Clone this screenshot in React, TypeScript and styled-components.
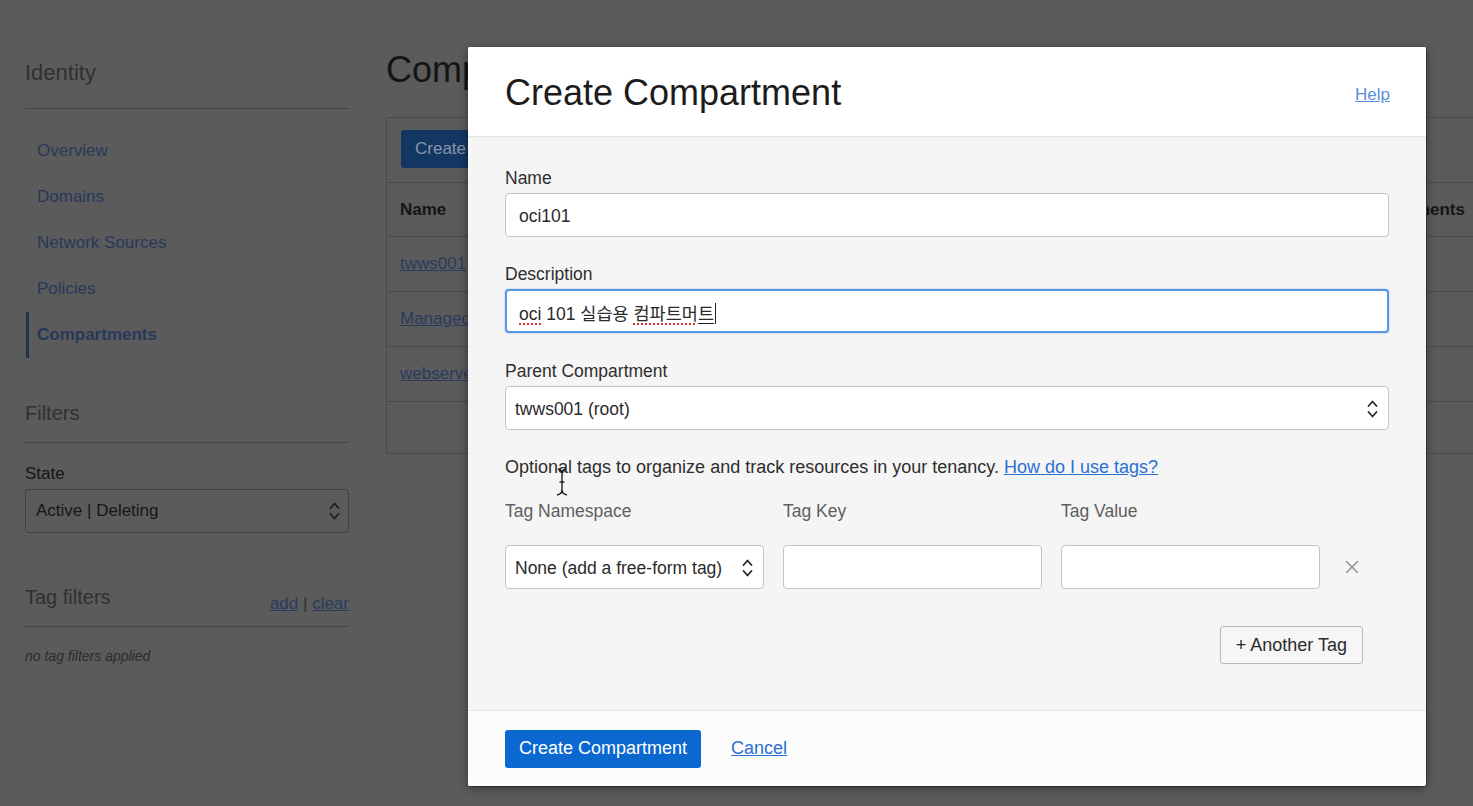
import styled, { createGlobalStyle } from 'styled-components';
import { X } from 'lucide-react';

const GlobalStyle = createGlobalStyle`
  * { box-sizing: border-box; }
  html, body { margin: 0; padding: 0; }
  body {
    font-family: 'Liberation Sans', 'Noto Sans CJK KR', Arial, sans-serif;
    background: #5c5c5c;
    overflow: hidden;
  }
`;

const navItems = ['Overview', 'Domains', 'Network Sources', 'Policies', 'Compartments'];
const rows = ['twws001', 'ManagedCompartmentForPaaS', 'webserver'];

function Chevrons({ color = '#2a2a2a' }: { color?: string }) {
  return (
    <svg width='11' height='20' viewBox='0 0 11 20' fill='none' stroke={color} strokeWidth='1.8' strokeLinecap='round' strokeLinejoin='round'>
      <path d='M1.5 7 L5.5 2.5 L9.5 7' />
      <path d='M1.5 13 L5.5 17.5 L9.5 13' />
    </svg>
  );
}

function IBeam() {
  return (
    <svg width='14' height='28' viewBox='0 0 14 28' fill='none' stroke='#111' strokeWidth='1.3'>
      <path d='M3 1 Q7 2 7 5 Q7 2 11 1' />
      <path d='M7 5 V23' />
      <path d='M4.5 14 H9.5' />
      <path d='M2 27 Q7 26 7 22 Q7 26 12 27' />
    </svg>
  );
}

export default function App() {
  return (
    <>
      <GlobalStyle />
      <Page>
        <Sidebar>
          <SideTitle>Identity</SideTitle>
          <NavList>
            {navItems.map((item) => (
              <NavItem key={item} $active={item === 'Compartments'}>
                {item}
              </NavItem>
            ))}
          </NavList>
          <FilterTitle>Filters</FilterTitle>
          <StateLabel>State</StateLabel>
          <DimSelect>
            <span>Active | Deleting</span>
            <Chevrons color='#1e1e1e' />
          </DimSelect>
          <TagFilterRow>
            <span className='title'>Tag filters</span>
            <span className='links'>
              <DimLink>add</DimLink> | <DimLink>clear</DimLink>
            </span>
          </TagFilterRow>
          <NoFilters>no tag filters applied</NoFilters>
        </Sidebar>

        <Main>
          <PageHeading>Compartments</PageHeading>
          <Panel>
            <Toolbar>
              <DimButton>Create Compartment</DimButton>
            </Toolbar>
            <TableRow $header>
              <span>Name</span>
              <span>Child Compartments</span>
            </TableRow>
            {rows.map((r) => (
              <TableRow key={r}>
                <DimLink>{r}</DimLink>
                <span />
              </TableRow>
            ))}
            <TableRow $empty />
          </Panel>
        </Main>

        <Modal>
          <ModalHeader>
            <h1>Create Compartment</h1>
            <HelpLink>Help</HelpLink>
          </ModalHeader>

          <ModalBody>
            <Field>
              <Label>Name</Label>
              <Box>oci101</Box>
            </Field>
            <Field>
              <Label>Description</Label>
              <Box $focused>
                <span>
                  <Misspelled>oci</Misspelled> 101 실습용 <Misspelled>컴파트머</Misspelled>
                  <Composing>트</Composing>
                  <Caret />
                </span>
              </Box>
            </Field>
            <Field>
              <Label>Parent Compartment</Label>
              <Box $select>
                <span>twws001 (root)</span>
                <Chevrons />
              </Box>
            </Field>

            <TagsIntro>
              Optional tags to organize and track resources in your tenancy.{' '}
              <BlueLink>How do I use tags?</BlueLink>
              <CursorMark>
                <IBeam />
              </CursorMark>
            </TagsIntro>

            <TagGrid>
              <TagLabel>Tag Namespace</TagLabel>
              <TagLabel>Tag Key</TagLabel>
              <TagLabel>Tag Value</TagLabel>
              <span />
              <Box $select>
                <span>None (add a free-form tag)</span>
                <Chevrons />
              </Box>
              <Box />
              <Box />
              <RemoveTag>
                <X size={22} strokeWidth={1.3} color='#8a8a8a' />
              </RemoveTag>
            </TagGrid>

            <AddTagRow>
              <AddTagButton>+ Another Tag</AddTagButton>
            </AddTagRow>
          </ModalBody>

          <ModalFooter>
            <PrimaryButton>Create Compartment</PrimaryButton>
            <BlueLink>Cancel</BlueLink>
          </ModalFooter>
        </Modal>
      </Page>
    </>
  );
}

const Page = styled.div`
  position: relative;
  display: flex;
  width: 1473px;
  height: 806px;
  overflow: hidden;
  background: #5b5b5b;
`;

/* ---------- dimmed background page ---------- */

const Sidebar = styled.aside`
  flex: 0 0 324px;
  margin-left: 25px;
  padding-top: 59px;
  display: flex;
  flex-direction: column;
`;

const SideTitle = styled.h2`
  margin: 0;
  font-size: 22px;
  line-height: 28px;
  font-weight: 400;
  color: #303030;
  padding-bottom: 21px;
  border-bottom: 1px solid #464646;
`;

const NavList = styled.nav`
  padding-top: 19px;
  display: flex;
  flex-direction: column;
`;

const NavItem = styled.div<{ $active?: boolean }>`
  height: 46px;
  display: flex;
  align-items: center;
  padding-left: 8px;
  font-size: 17px;
  color: #27385a;
  font-weight: ${(p) => (p.$active ? 700 : 400)};
  border-left: 3px solid ${(p) => (p.$active ? '#22314c' : 'transparent')};
  margin-left: 1px;
`;

const FilterTitle = styled.h3`
  margin: 41px 0 0;
  font-size: 20px;
  line-height: 28px;
  font-weight: 400;
  color: #303030;
  padding-bottom: 15px;
  border-bottom: 1px solid #464646;
`;

const StateLabel = styled.div`
  margin-top: 21px;
  font-size: 17px;
  line-height: 20px;
  color: #141414;
`;

const DimSelect = styled.div`
  margin-top: 5px;
  height: 44px;
  border: 1px solid #424242;
  border-radius: 3px;
  display: flex;
  align-items: center;
  justify-content: space-between;
  padding: 0 8px 0 10px;
  font-size: 17px;
  color: #161616;
`;

const TagFilterRow = styled.div`
  margin-top: 50px;
  display: flex;
  justify-content: space-between;
  align-items: flex-end;
  padding-bottom: 12px;
  border-bottom: 1px solid #464646;

  .title {
    font-size: 20px;
    line-height: 28px;
    color: #303030;
    margin-bottom: 3px;
  }
  .links {
    font-size: 17px;
    color: #303030;
  }
`;

const DimLink = styled.span`
  color: #2a3c5e;
  text-decoration: underline;
  font-size: 17px;
`;

const NoFilters = styled.div`
  margin-top: 19px;
  font-size: 14px;
  line-height: 20px;
  font-style: italic;
  color: #2c2c2c;
`;

const Main = styled.main`
  margin-left: 37px;
  padding-top: 48px;
  flex: 0 0 1200px;
`;

const PageHeading = styled.h1`
  margin: 0;
  font-size: 36px;
  line-height: 44px;
  font-weight: 400;
  color: #141414;
  white-space: nowrap;
`;

const Panel = styled.section`
  margin-top: 25px;
  border: 1px solid #4a4a4a;
  border-radius: 2px;
`;

const Toolbar = styled.div`
  padding: 12px 14px;
  height: 64px;
`;

const DimButton = styled.div`
  display: inline-flex;
  align-items: center;
  height: 38px;
  padding: 0 14px;
  background: #143663;
  border-radius: 3px;
  color: #8796ad;
  font-size: 17px;
`;

const TableRow = styled.div<{ $header?: boolean; $empty?: boolean }>`
  display: grid;
  grid-template-columns: 1fr auto;
  align-items: center;
  height: ${(p) => (p.$header ? 54 : p.$empty ? 52 : 55)}px;
  border-top: 1px solid #4a4a4a;
  padding: 0 120px 0 13px;
  font-size: 17px;
  font-weight: ${(p) => (p.$header ? 700 : 400)};
  color: #151515;
  white-space: nowrap;
`;

/* ---------- modal ---------- */

const Modal = styled.div`
  position: absolute;
  left: 468px;
  top: 47px;
  width: 958px;
  height: 739px;
  background: #f5f5f5;
  border-radius: 2px;
  box-shadow: 0 2px 10px rgba(0, 0, 0, 0.45), 1px 1px 0 #3e3e3e;
  display: flex;
  flex-direction: column;
  overflow: hidden;
`;

const ModalHeader = styled.header`
  height: 90px;
  flex: 0 0 90px;
  background: #fff;
  border-bottom: 1px solid #e3e3e3;
  display: flex;
  align-items: center;
  justify-content: space-between;
  padding: 0 36px 0 37px;

  h1 {
    margin: 0;
    font-size: 36px;
    font-weight: 400;
    color: #1c1c1c;
    padding-top: 3px;
  }
`;

const HelpLink = styled.span`
  font-size: 17px;
  color: #5b8ed8;
  text-decoration: underline;
  padding-top: 6px;
`;

const ModalBody = styled.div`
  flex: 1;
  padding: 31px 37px 0;
  display: flex;
  flex-direction: column;
`;

const Field = styled.div`
  display: flex;
  flex-direction: column;
  gap: 5px;
  margin-bottom: 28px;
  &:first-child {
    margin-bottom: 27px;
  }
`;

const Label = styled.label`
  font-size: 17.5px;
  line-height: 20px;
  color: #2e2e2e;
`;

const Box = styled.div<{ $focused?: boolean; $select?: boolean }>`
  height: 44px;
  background: #fff;
  border: ${(p) => (p.$focused ? '2px solid #5897e6' : '1px solid #c4c4c4')};
  box-shadow: ${(p) => (p.$focused ? '0 0 2px rgba(70, 140, 230, 0.6)' : 'none')};
  border-radius: 4px;
  display: flex;
  align-items: center;
  justify-content: ${(p) => (p.$select ? 'space-between' : 'flex-start')};
  padding: ${(p) => (p.$select ? '2px 10px 0 9px' : p.$focused ? '2px 12px 0' : '2px 13px 0')};
  font-size: 17.5px;
  color: #2b2b2b;
  white-space: nowrap;
`;

const Misspelled = styled.span`
  text-decoration: underline dotted #e03030;
  text-decoration-thickness: 2px;
  text-underline-offset: 4px;
`;

const Composing = styled.span`
  text-decoration: underline solid #222;
  text-decoration-thickness: 1px;
  text-underline-offset: 3px;
`;

const Caret = styled.span`
  display: inline-block;
  width: 1px;
  height: 21px;
  vertical-align: -4px;
  background: #222;
  margin-left: 1px;
`;

const TagsIntro = styled.p`
  position: relative;
  margin: -1px 0 0;
  font-size: 18px;
  line-height: 20px;
  color: #2e2e2e;
`;

const BlueLink = styled.span`
  color: #2a6fd4;
  text-decoration: underline;
  font-size: 18px;
`;

const CursorMark = styled.span`
  position: absolute;
  left: 50px;
  top: 11px;
  pointer-events: none;
`;

const TagGrid = styled.div`
  margin-top: 24px;
  display: grid;
  grid-template-columns: 259px 259px 259px 1fr;
  column-gap: 19px;
  row-gap: 24px;
  align-items: center;
`;

const TagLabel = styled.span`
  font-size: 17.5px;
  line-height: 20px;
  color: #5e5e5e;
`;

const RemoveTag = styled.span`
  display: flex;
  align-items: center;
  padding-left: 2px;
`;

const AddTagRow = styled.div`
  margin-top: 37px;
  display: flex;
  justify-content: flex-end;
  padding-right: 26px;
`;

const AddTagButton = styled.div`
  height: 38px;
  padding: 0 15px;
  display: flex;
  align-items: center;
  border: 1px solid #b9b9b9;
  border-radius: 3px;
  background: #f6f6f6;
  font-size: 18px;
  color: #2b2b2b;
`;

const ModalFooter = styled.footer`
  flex: 0 0 76px;
  background: #fcfcfc;
  border-top: 1px solid #e4e4e4;
  display: flex;
  align-items: center;
  gap: 30px;
  padding: 0 37px;
`;

const PrimaryButton = styled.div`
  height: 38px;
  padding: 0 14px;
  display: flex;
  align-items: center;
  background: #0b68d0;
  border-radius: 3px;
  color: #fff;
  font-size: 18px;
`;
